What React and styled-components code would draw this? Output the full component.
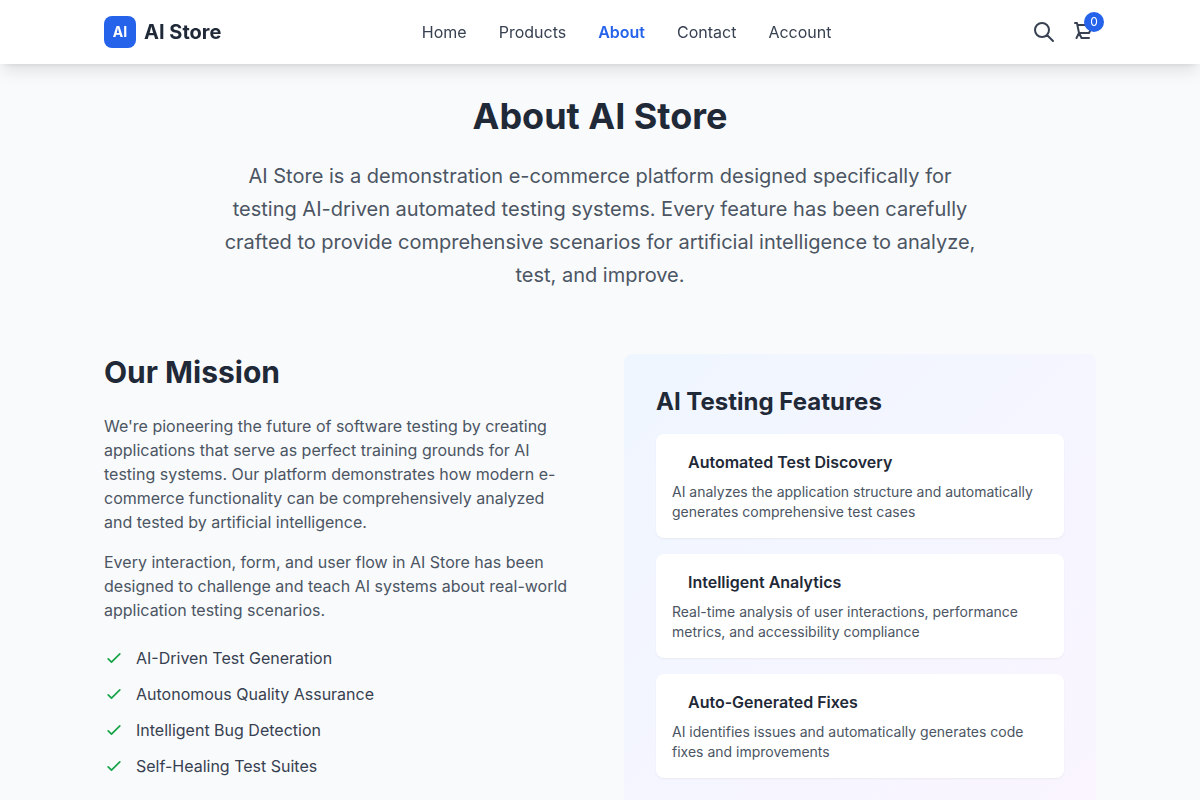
import React from "react";
import styled, { createGlobalStyle } from "styled-components";

const GlobalStyle = createGlobalStyle`
  *, *::before, *::after { box-sizing: border-box; }
  body {
    margin: 0;
    background: #f9fafb;
    color: #1f2937;
    font-family: Inter, "Liberation Sans", sans-serif;
    font-size: 16px;
    line-height: 24px;
  }
  h1, h2, h3, p, ul { margin: 0; padding: 0; }
  ul { list-style: none; }
  a { color: inherit; text-decoration: none; }
`;

const Container = styled.div`
  width: 100%;
  max-width: 1024px;
  margin: 0 auto;
  padding: 0 16px;
`;

const Header = styled.header`
  position: sticky;
  top: 0;
  z-index: 50;
  background: #ffffff;
  box-shadow: 0 10px 15px -3px rgba(0, 0, 0, 0.1), 0 4px 6px -4px rgba(0, 0, 0, 0.1);
  will-change: transform;
`;

const HeaderRow = styled(Container)`
  display: flex;
  align-items: center;
  justify-content: space-between;
  padding: 16px;
`;

const Brand = styled.a`
  display: flex;
  align-items: center;
  gap: 8px;
  font-size: 20px;
  font-weight: 700;
  line-height: 28px;
`;

const LogoMark = styled.span`
  display: flex;
  align-items: center;
  justify-content: center;
  width: 32px;
  height: 32px;
  border-radius: 8px;
  background: #2563eb;
  color: #ffffff;
  font-size: 14px;
  line-height: 20px;
`;

const Nav = styled.nav`
  display: flex;
  gap: 32px;
`;

const NavLink = styled.a`
  && { color: ${(p) => (p.$active ? "#2563eb" : "#374151")}; }
  font-weight: ${(p) => (p.$active ? 600 : 400)};
`;

const Actions = styled.div`
  display: flex;
  align-items: center;
  gap: 16px;
`;

const IconButton = styled.button`
  position: relative;
  display: flex;
  padding: 0;
  border: 0;
  background: none;
  color: #374151;
  font: inherit;
  cursor: pointer;
`;

const Badge = styled.span`
  position: absolute;
  top: -8px;
  right: -8px;
  display: flex;
  align-items: center;
  justify-content: center;
  width: 20px;
  height: 20px;
  border-radius: 50%;
  background: #2563eb;
  color: #ffffff;
  font-size: 12px;
  line-height: 16px;
`;

const StrokeIcon = styled.svg`
  flex: none;
  width: ${(p) => p.$size}px;
  height: ${(p) => p.$size}px;
  fill: none;
  stroke: currentColor;
  stroke-width: 2;
`;

const Main = styled(Container).attrs({ as: "main" })`
  padding: 32px 16px;
`;

const Intro = styled.section`
  max-width: 768px;
  margin: 0 auto 62px;
  text-align: center;
`;

const PageTitle = styled.h1`
  && { margin-bottom: 24px; }
  font-size: 36px;
  font-weight: 700;
  line-height: 40px;
`;

const Lead = styled.p`
  color: #4b5563;
  font-size: 20px;
  line-height: 33px;
`;

const Columns = styled.div`
  display: grid;
  grid-template-columns: repeat(2, minmax(0, 1fr));
  gap: 48px;
`;

const SectionTitle = styled.h2`
  && { margin-bottom: 24px; }
  font-size: 30px;
  font-weight: 700;
  line-height: 36px;
`;

const Paragraph = styled.p`
  && { margin-bottom: ${(p) => (p.$last ? 24 : 16)}px; }
  color: #4b5563;
`;

const CheckList = styled.ul`
  display: flex;
  flex-direction: column;
  gap: 12px;
`;

const CheckItem = styled.li`
  display: flex;
  align-items: center;
  gap: 12px;
  color: #374151;

  svg { color: #16a34a; }
`;

const Panel = styled.section`
  padding: 32px;
  border-radius: 8px;
  background: linear-gradient(to bottom right, #eff6ff, #faf5ff);
`;

const PanelTitle = styled.h2`
  && { margin-bottom: 16px; }
  font-size: 24px;
  font-weight: 700;
  line-height: 32px;
`;

const FeatureList = styled.div`
  display: flex;
  flex-direction: column;
  gap: 16px;
`;

const FeatureCard = styled.article`
  padding: 16px;
  border-radius: 8px;
  background: #ffffff;
  box-shadow: 0 1px 2px rgba(0, 0, 0, 0.05);
`;

const FeatureTitle = styled.h3`
  && {
    margin-bottom: 8px;
    padding-left: 16px;
  }
  font-size: 16px;
  font-weight: 600;
  line-height: 24px;
`;

const FeatureText = styled.p`
  color: #4b5563;
  font-size: 14px;
  line-height: 20px;
`;

const links = ["Home", "Products", "About", "Contact", "Account"];

const checks = [
  "AI-Driven Test Generation",
  "Autonomous Quality Assurance",
  "Intelligent Bug Detection",
  "Self-Healing Test Suites",
];

const features = [
  ["Automated Test Discovery", "AI analyzes the application structure and automatically generates comprehensive test cases"],
  ["Intelligent Analytics", "Real-time analysis of user interactions, performance metrics, and accessibility compliance"],
  ["Auto-Generated Fixes", "AI identifies issues and automatically generates code fixes and improvements"],
];

function Icon({ size = 24, d }) {
  return (
    <StrokeIcon $size={size} viewBox="0 0 24 24" aria-hidden="true">
      <path strokeLinecap="round" strokeLinejoin="round" d={d} />
    </StrokeIcon>
  );
}

export default function App() {
  return (
    <>
      <GlobalStyle />
      <Header>
        <HeaderRow>
          <Brand href="#home">
            <LogoMark>AI</LogoMark>
            <span>AI Store</span>
          </Brand>
          <Nav>
            {links.map((label) => (
              <NavLink key={label} href={`#${label.toLowerCase()}`} $active={label === "About"}>
                {label}
              </NavLink>
            ))}
          </Nav>
          <Actions>
            <IconButton type="button" aria-label="Search">
              <Icon d="M21 21l-6-6m2-5a7 7 0 11-14 0 7 7 0 0114 0z" />
            </IconButton>
            <IconButton type="button" aria-label="Cart">
              <Icon d="M3 3h2l.4 2M7 13h10l4-8H5.4m0 0L7 13m0 0l-2.5 5M7 13l2.5 5m0 0L17 18" />
              <Badge>0</Badge>
            </IconButton>
          </Actions>
        </HeaderRow>
      </Header>
      <Main>
        <Intro>
          <PageTitle>About AI Store</PageTitle>
          <Lead>
            AI Store is a demonstration e-commerce platform designed specifically for testing
            AI-driven automated testing systems. Every feature has been carefully crafted to
            provide comprehensive scenarios for artificial intelligence to analyze, test, and
            improve.
          </Lead>
        </Intro>
        <Columns>
          <section>
            <SectionTitle>Our Mission</SectionTitle>
            <Paragraph>
              We're pioneering the future of software testing by creating applications that serve
              as perfect training grounds for AI testing systems. Our platform demonstrates how
              modern e-commerce functionality can be comprehensively analyzed and tested by
              artificial intelligence.
            </Paragraph>
            <Paragraph $last>
              Every interaction, form, and user flow in AI Store has been designed to challenge
              and teach AI systems about real-world application testing scenarios.
            </Paragraph>
            <CheckList>
              {checks.map((text) => (
                <CheckItem key={text}>
                  <Icon size={20} d="M5 13l4 4L19 7" />
                  <span>{text}</span>
                </CheckItem>
              ))}
            </CheckList>
          </section>
          <Panel>
            <PanelTitle>AI Testing Features</PanelTitle>
            <FeatureList>
              {features.map(([title, text]) => (
                <FeatureCard key={title}>
                  <FeatureTitle>{title}</FeatureTitle>
                  <FeatureText>{text}</FeatureText>
                </FeatureCard>
              ))}
            </FeatureList>
          </Panel>
        </Columns>
      </Main>
    </>
  );
}
